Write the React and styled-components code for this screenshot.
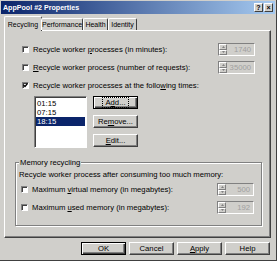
import React from "react";
import styled, { createGlobalStyle } from "styled-components";

const GlobalStyle = createGlobalStyle`
  html, body {
    margin: 0;
    padding: 0;
    background: #d0cfcb;
  }
  body {
    font-family: "Liberation Sans", Arial, sans-serif;
    font-size: 7.7px;
    color: #000;
  }
`;

const Window = styled.div`
  width: 277px;
  height: 261px;
  box-sizing: border-box;
  background: #d0cfcb;
  border-right: 1px solid #404040;
  border-bottom: 1px solid #404040;
  display: flex;
  flex-direction: column;
`;

const TitleBar = styled.div`
  height: 13px;
  margin: 1px 1px 0 1px;
  padding: 0 2px 0 2px;
  background: linear-gradient(to right, #0a246a, #a6caf0);
  display: flex;
  align-items: center;
  justify-content: space-between;
`;

const Title = styled.span`
  color: #fff;
  font-weight: bold;
  font-size: 7.1px;
`;

const TitleButtons = styled.div`
  display: flex;
  gap: 1px;
`;

const TitleButton = styled.div`
  width: 9px;
  height: 9px;
  box-sizing: border-box;
  background: #d0cfcb;
  border: 1px solid;
  border-color: #fff #404040 #404040 #fff;
  font-size: 7px;
  font-weight: bold;
  line-height: 7px;
  text-align: center;
  color: #000;
`;

const Body = styled.div`
  flex: 1;
  display: flex;
  flex-direction: column;
  padding: 2px 5px 0 4px;
`;

const TabStrip = styled.div`
  display: flex;
  align-items: flex-end;
  height: 14px;
  padding-left: 2px;
  position: relative;
  z-index: 1;
`;

const Tab = styled.div`
  width: ${(p) => p.$w}px;
  height: ${(p) => (p.$active ? 15 : 12)}px;
  margin: ${(p) => (p.$active ? "0 -1px -1px -2px" : "0")};
  box-sizing: border-box;
  background: #d0cfcb;
  border: 1px solid;
  border-color: #fff #404040 transparent #fff;
  border-bottom: none;
  border-radius: 2px 2px 0 0;
  font-size: 7px;
  display: flex;
  align-items: center;
  justify-content: center;
  white-space: nowrap;
`;

const Panel = styled.div`
  height: 208px;
  box-sizing: border-box;
  border: 1px solid;
  border-color: #fff #404040 #404040 #fff;
  box-shadow: inset -1px -1px 0 #808080;
  padding: 12px 15px 0 10px;
  display: flex;
  flex-direction: column;
`;

const OptionRow = styled.div`
  height: 13px;
  margin-bottom: 5px;
  padding-left: 7px;
  display: flex;
  align-items: center;
  justify-content: space-between;
`;

const CheckLabel = styled.label`
  display: flex;
  align-items: center;
  gap: 4px;
  white-space: nowrap;
`;

const Box = styled.span`
  width: 7px;
  height: 7px;
  box-sizing: border-box;
  background: #fff;
  border: 1px solid;
  border-color: #808080 #fff #fff #808080;
  box-shadow: inset 1px 1px 0 #404040;
  position: relative;
  display: inline-block;
`;

const Tick = styled.svg`
  position: absolute;
  left: 0;
  top: 0;
`;

const Spinner = styled.div`
  width: 37px;
  height: 13px;
  flex-shrink: 0;
  box-sizing: border-box;
  border: 1px solid;
  border-color: #808080 #fff #fff #808080;
  display: flex;
`;

const SpinArrows = styled.div`
  width: 8px;
  display: flex;
  flex-direction: column;
`;

const SpinArrow = styled.div`
  flex: 1;
  box-sizing: border-box;
  border: 1px solid;
  border-color: #fff #808080 #808080 #fff;
  display: flex;
  align-items: center;
  justify-content: center;
`;

const SpinValue = styled.div`
  flex: 1;
  color: #a0a0a0;
  text-align: right;
  padding-right: 3px;
  line-height: 11px;
`;

const TimesArea = styled.div`
  display: flex;
  gap: 6px;
  padding-left: 19px;
  margin-top: -1px;
`;

const ListBox = styled.div`
  width: 53px;
  height: 52px;
  box-sizing: border-box;
  background: #fff;
  border: 1px solid;
  border-color: #808080 #fff #fff #808080;
  box-shadow: inset 1px 1px 0 #404040;
  padding: 2px 1px 0 1px;
`;

const ListItem = styled.div`
  height: 9px;
  line-height: 9px;
  padding-left: 1px;
  background: ${(p) => (p.$selected ? "#0a246a" : "transparent")};
  color: ${(p) => (p.$selected ? "#fff" : "#000")};
`;

const SideButtons = styled.div`
  display: flex;
  flex-direction: column;
  gap: 6px;
`;

const Button = styled.div`
  width: ${(p) => p.$w ?? 45}px;
  height: 13px;
  box-sizing: border-box;
  border: 1px solid;
  border-color: ${(p) => (p.$default ? "#000" : "#fff #404040 #404040 #fff")};
  box-shadow: ${(p) =>
    p.$default
      ? "inset 1px 1px 0 #fff, inset -1px -1px 0 #404040, inset -2px -2px 0 #808080"
      : "inset -1px -1px 0 #808080"};
  display: flex;
  align-items: center;
  justify-content: center;
  white-space: nowrap;
`;

const Focus = styled.span`
  outline: 1px dotted #000;
  padding: 0 2px;
`;

const Group = styled.div`
  margin: 14px -7px 0 0;
  padding: 6px 7px 0 3px;
  height: 64px;
  box-sizing: border-box;
  border: 1px solid #808080;
  box-shadow: 1px 1px 0 #fff, inset 1px 1px 0 #fff;
  position: relative;
  display: flex;
  flex-direction: column;
`;

const Legend = styled.span`
  position: absolute;
  left: 3px;
  top: -5px;
  padding: 0 1px;
  line-height: 9px;
  background: #d0cfcb;
`;

const GroupText = styled.div`
  height: 12px;
  line-height: 12px;
  margin-bottom: 2px;
`;

const GroupRow = styled(OptionRow)`
  padding-left: 2px;
`;

const Footer = styled.div`
  display: flex;
  justify-content: flex-end;
  gap: 3px;
  padding: 4px 1px 0 0;
`;

const U = styled.span`
  text-decoration: underline;
`;

const Arrow = ({ down }) => (
  <svg width="3" height="2" viewBox="0 0 3 2">
    <path d={down ? "M0 0h3L1.5 2z" : "M0 2h3L1.5 0z"} fill="#808080" />
  </svg>
);

const Check = ({ checked, children }) => (
  <CheckLabel>
    <Box>
      {checked && (
        <Tick width="5" height="5" viewBox="0 0 5 5">
          <path d="M0.5 2l1.5 1.5L4.5 0.5" stroke="#000" strokeWidth="1.2" fill="none" />
        </Tick>
      )}
    </Box>
    <span>{children}</span>
  </CheckLabel>
);

const Spin = ({ value }) => (
  <Spinner>
    <SpinArrows>
      <SpinArrow>
        <Arrow />
      </SpinArrow>
      <SpinArrow>
        <Arrow down />
      </SpinArrow>
    </SpinArrows>
    <SpinValue>{value}</SpinValue>
  </Spinner>
);

const tabs = [
  { label: "Recycling", w: 38 },
  { label: "Performance", w: 42 },
  { label: "Health", w: 25 },
  { label: "Identity", w: 29 },
];

const times = ["01:15", "07:15", "18:15"];

export default function App() {
  return (
    <>
      <GlobalStyle />
      <Window>
        <TitleBar>
          <Title>AppPool #2 Properties</Title>
          <TitleButtons>
            <TitleButton>?</TitleButton>
            <TitleButton>×</TitleButton>
          </TitleButtons>
        </TitleBar>
        <Body>
          <TabStrip>
            {tabs.map((t, i) => (
              <Tab key={t.label} $w={t.w} $active={i === 0}>
                {t.label}
              </Tab>
            ))}
          </TabStrip>
          <Panel>
            <OptionRow>
              <Check>
                Recycle worker <U>p</U>rocesses (in minutes):
              </Check>
              <Spin value="1740" />
            </OptionRow>
            <OptionRow>
              <Check>
                <U>R</U>ecycle worker process (number of requests):
              </Check>
              <Spin value="35000" />
            </OptionRow>
            <OptionRow>
              <Check checked>
                Recycle worker processes at the follo<U>w</U>ing times:
              </Check>
            </OptionRow>
            <TimesArea>
              <ListBox>
                {times.map((t, i) => (
                  <ListItem key={t} $selected={i === times.length - 1}>
                    {t}
                  </ListItem>
                ))}
              </ListBox>
              <SideButtons>
                <Button $default>
                  <Focus>
                    A<U>d</U>d...
                  </Focus>
                </Button>
                <Button>
                  Re<U>m</U>ove...
                </Button>
                <Button>
                  <U>E</U>dit...
                </Button>
              </SideButtons>
            </TimesArea>
            <Group>
              <Legend>Memory recycling</Legend>
              <GroupText>Recycle worker process after consuming too much memory:</GroupText>
              <GroupRow>
                <Check>
                  Maximum <U>v</U>irtual memory (in megabytes):
                </Check>
                <Spin value="500" />
              </GroupRow>
              <GroupRow>
                <Check>
                  Maximum <U>u</U>sed memory (in megabytes):
                </Check>
                <Spin value="192" />
              </GroupRow>
            </Group>
          </Panel>
          <Footer>
            <Button $default>OK</Button>
            <Button>Cancel</Button>
            <Button>
              <U>A</U>pply
            </Button>
            <Button>Help</Button>
          </Footer>
        </Body>
      </Window>
    </>
  );
}
